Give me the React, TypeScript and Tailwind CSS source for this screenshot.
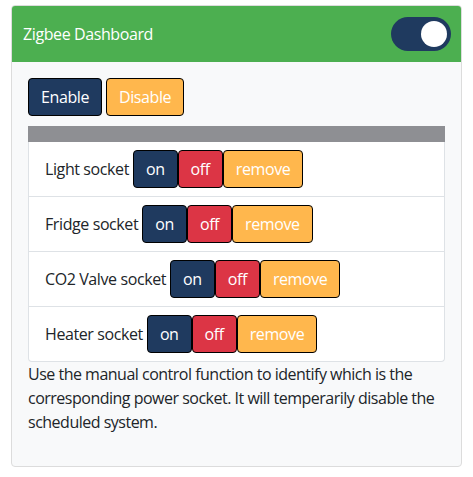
import { useState } from "react";

const sockets = ["Light socket", "Fridge socket", "CO2 Valve socket", "Heater socket"];

function Toggle({ onChange }: { onChange: () => void }) {
  return (
    <button
      onClick={onChange}
      className="w-[60px] h-[34px] rounded-full bg-[#1f3a5f] flex items-center px-[4px] justify-end"
    >
      <span className="block w-[26px] h-[26px] rounded-full bg-white" />
    </button>
  );
}

export default function App() {
  const [enabled, setEnabled] = useState(true);

  return (
    <div className="pt-[5px] pl-[11px] tracking-[-0.4px]" style={{ fontFamily: '"Open Sans", "Noto Sans", sans-serif' }}>
      <div className="w-[451px] border border-[#dcdcdc] rounded-[4px] bg-[#f8f9fa] overflow-hidden text-[#212529]">
        <div className="h-[56px] bg-[#4caf50] flex items-center justify-between pl-[11px] pr-[10px]">
          <span className="text-white text-[16px]">Zigbee Dashboard</span>
          <Toggle onChange={() => setEnabled(!enabled)} />
        </div>
        <div className="p-4">
          <div className="flex gap-[4px]">
            <button className="h-[38px] px-3 rounded-[4px] border border-black bg-[#1f3a5f] text-white text-[16px]">Enable</button>
            <button className="h-[38px] px-3 rounded-[4px] border border-black bg-[#ffb74d] text-white text-[16px]">Disable</button>
          </div>
          <div className="mt-[10px] h-[16px] bg-[#8e8f93]" />
          <div className="border border-[#dee2e6] border-t-0 rounded-b-[4px] bg-white">
            {sockets.map((name, i) => (
              <div
                key={name}
                className={`flex items-center px-4 py-2 ${i > 0 ? "border-t border-[#dee2e6]" : ""}`}
              >
                <span className="text-[16px] mr-[4px]">{name}</span>
                <button className="h-[38px] px-3 rounded-[4px] border border-black bg-[#1f3a5f] text-white text-[16px]">on</button>
                <button className="h-[38px] px-3 rounded-[4px] border border-black bg-[#dc3545] text-white text-[16px]">off</button>
                <button className="h-[38px] px-3 rounded-[4px] border border-black bg-[#ffb74d] text-white text-[16px]">remove</button>
              </div>
            ))}
          </div>
          <p className="text-[16px] leading-[24px] mb-4 tracking-[-0.5px]">
            Use the manual control function to identify which is the corresponding power socket. It will temperarily disable the scheduled system.
          </p>
        </div>
      </div>
    </div>
  );
}
